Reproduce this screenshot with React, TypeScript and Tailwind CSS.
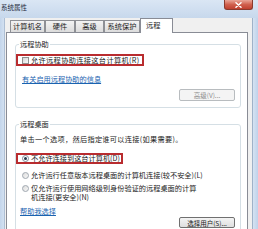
export default function App() {
  const txt = "text-[7.2px] leading-[9px] h-[9px] whitespace-nowrap";
  return (
    <div className="w-[258px] h-[229px] overflow-hidden flex flex-col bg-[#c8d9ed] font-['Noto_Sans_CJK_SC',sans-serif] text-[#222]">
      {/* title bar */}
      <div className="h-[18px] shrink-0 flex items-start bg-gradient-to-b from-[#dae6f4] to-[#c7d8ec]">
        <div className="ml-[1px] mt-[3px] text-[6.5px] leading-[8px] text-[#1e2b3c] whitespace-nowrap">系统属性</div>
        <div className="flex-1" />
        <div className="mr-[5px] w-[29px] h-[10px] rounded-b-[3px] border border-t-0 border-[#8a3a2e] bg-gradient-to-b from-[#e9a598] via-[#d0604e] to-[#c0402f] flex items-center justify-center">
          <svg width="7" height="6" viewBox="0 0 7 6">
            <path d="M1 0.8 L6 5.2 M6 0.8 L1 5.2" stroke="#fff" strokeWidth="1.5" strokeLinecap="round" />
          </svg>
        </div>
      </div>
      {/* body */}
      <div className="flex-1 flex min-h-0">
        <div className="w-[5px] shrink-0 border-r border-[#aebfd4] bg-gradient-to-r from-[#c3d5eb] to-[#d3e1f1]" />
        <div className="flex-1 flex flex-col bg-[#f0f0f0] pl-[1px] pr-[4px] border-r border-[#9fb2c8] min-w-0">
          {/* tabs */}
          <div className="h-[14px] shrink-0 flex items-end ml-[4px]">
            {[
              ["计算机名", "w-[35px]"],
              ["硬件", "w-[30px]"],
              ["高级", "w-[29px]"],
              ["系统保护", "w-[36px]"],
            ].map(([t, w]) => (
              <div
                key={t}
                className={`${w} h-[12px] border border-b-0 border-[#8e9095] bg-gradient-to-b from-[#f3f3f3] to-[#dcdcdc] flex items-center justify-center text-[7.2px] leading-[9px] whitespace-nowrap`}
              >
                {t}
              </div>
            ))}
            <div className="relative z-10 w-[33px] h-[15px] -mb-[1px] border border-b-0 border-[#898c95] bg-white flex items-start justify-start pl-[5px] pt-[2px] text-[7.2px] leading-[9px] whitespace-nowrap">
              远程
            </div>
          </div>
          {/* panel */}
          <div className="flex-1 flex flex-col bg-white border border-[#898c95] pt-[11px] pl-[8px] pr-[6px]">
            {/* group 1 */}
            <div className="border border-[#d5dfe5] rounded-[3px] flex flex-col pb-[6px]">
              <div className={`-mt-[5px] ml-[3px] px-[1px] bg-white w-fit ${txt}`}>远程协助</div>
              <div className="mt-[5px] h-[12px] w-[128px] border-2 border-[#b92c2f] flex items-center pl-[4px] gap-[2px]">
                <div className="w-[7px] h-[7px] shrink-0 border border-[#8e8f8f] bg-gradient-to-br from-[#d8d8d8] to-[#f8f8f8]" />
                <span className={`${txt} tracking-[0.35px]`}>允许远程协助连接这台计算机(R)</span>
              </div>
              <div className={`mt-[9px] ml-[6px] ${txt} text-[#1a63b0] underline w-fit`}>有关启用远程协助的信息</div>
              <div className="mt-[5px] flex justify-end pr-[5px]">
                <div className="w-[56px] h-[12px] rounded-[2px] border border-[#b8bcbf] bg-[#f4f4f4] flex items-center justify-center text-[6.5px] leading-[8px] text-[#8d8d8d] whitespace-nowrap">
                  高级(V)...
                </div>
              </div>
            </div>
            {/* group 2 */}
            <div className="mt-[16px] border border-[#d5dfe5] rounded-[3px] flex flex-col pb-[6px]">
              <div className={`-mt-[5px] ml-[3px] px-[1px] bg-white w-fit ${txt}`}>远程桌面</div>
              <div className={`mt-[6px] ml-[4px] ${txt} tracking-[0.3px]`}>单击一个选项，然后指定谁可以连接(如果需要)。</div>
              <div className="mt-[9px] h-[11px] w-[107px] border-2 border-[#b92c2f] flex items-center pl-[4px] gap-[2px]">
                <div className="w-[7px] h-[7px] shrink-0 rounded-full border border-[#7f8c99] bg-white flex items-center justify-center">
                  <div className="w-[3px] h-[3px] rounded-full bg-[#26384c]" />
                </div>
                <span className={txt}>不允许连接到这台计算机(D)</span>
              </div>
              <div className="mt-[7px] ml-[6px] flex items-start gap-[2px]">
                <div className="mt-[1px] w-[7px] h-[7px] shrink-0 rounded-full border border-[#a0a8b0] bg-gradient-to-br from-[#dcdcdc] to-[#f8f8f8]" />
                <span className={txt}>允许运行任意版本远程桌面的计算机连接(较不安全)(L)</span>
              </div>
              <div className="mt-[4px] ml-[6px] flex items-start gap-[2px]">
                <div className="mt-[1px] w-[7px] h-[7px] shrink-0 rounded-full border border-[#a0a8b0] bg-gradient-to-br from-[#dcdcdc] to-[#f8f8f8]" />
                <div className="flex flex-col">
                  <span className={txt}>仅允许运行使用网络级别身份验证的远程桌面的计算</span>
                  <span className={txt}>机连接(更安全)(N)</span>
                </div>
              </div>
              <div className="mt-[5px] flex justify-between items-start pr-[5px]">
                <div className={`ml-[4px] ${txt} text-[#1a63b0] underline`}>帮助我选择</div>
                <div className="mt-[10px] w-[56px] h-[11px] rounded-[2px] border border-[#707070] bg-gradient-to-b from-[#f4f4f4] to-[#dedede] flex items-center justify-center text-[6.5px] leading-[8px] text-[#1a1a1a] whitespace-nowrap">
                  选择用户(S)...
                </div>
              </div>
            </div>
          </div>
        </div>
        <div className="w-[5px] shrink-0 bg-gradient-to-r from-[#d6e3f2] to-[#bfd2ea]" />
      </div>
    </div>
  );
}
